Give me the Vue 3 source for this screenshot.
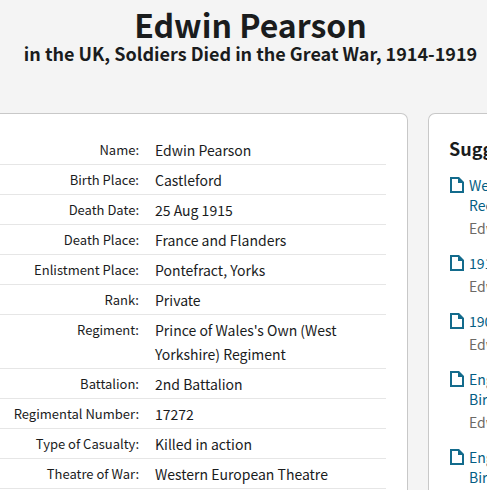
<script setup>
const facts = [
  { id: 'name', label: 'Name', value: 'Edwin Pearson' },
  { id: 'birth', label: 'Birth Place', value: 'Castleford' },
  { id: 'death-date', label: 'Death Date', value: '25 Aug 1915' },
  { id: 'death-place', label: 'Death Place', value: 'France and Flanders' },
  { id: 'enlistment', label: 'Enlistment Place', value: 'Pontefract, Yorks' },
  { id: 'rank', label: 'Rank', value: 'Private' },
  { id: 'regiment', label: 'Regiment', value: "Prince of Wales's Own (West Yorkshire) Regiment" },
  { id: 'battalion', label: 'Battalion', value: '2nd Battalion' },
  { id: 'number', label: 'Regimental Number', value: '17272' },
  { id: 'casualty', label: 'Type of Casualty', value: 'Killed in action' },
  { id: 'theatre', label: 'Theatre of War', value: 'Western European Theatre' },
]

const suggestions = [
  { id: 1, lines: ['West Yorkshire', 'Records'], person: 'Edwin Pearson' },
  { id: 2, lines: ['1911 England Census'], person: 'Edwin Pearson' },
  { id: 3, lines: ['1901 England Census'], person: 'Edwin Pearson' },
  { id: 4, lines: ['England & Wales, Civil Registration', 'Birth Index'], person: 'Edwin Pearson' },
  { id: 5, lines: ['England & Wales, Civil Registration', 'Birth Index'], person: 'Edwin Pearson' },
]
</script>

<template>
  <div class="page">
    <header class="heading">
      <h1>Edwin Pearson</h1>
      <p class="collection">in the UK, Soldiers Died in the Great War, 1914-1919</p>
    </header>
    <div class="columns">
      <main class="card record">
        <table>
          <tbody>
            <tr v-for="fact in facts" :key="fact.id">
              <th scope="row">{{ fact.label }}:</th>
              <td>{{ fact.value }}</td>
            </tr>
          </tbody>
        </table>
      </main>
      <aside class="card related">
        <h2>Suggested Records</h2>
        <ul>
          <li v-for="item in suggestions" :key="item.id">
            <svg class="doc" viewBox="0 0 16 18" aria-hidden="true">
              <path d="M2 2h7.6L14 6.4V16H2z" fill="none" stroke="currentColor" stroke-width="2" />
              <path d="M9 2l5 5H9z" fill="currentColor" />
            </svg>
            <div>
              <a href="#"><span v-for="line in item.lines" :key="line">{{ line }}</span></a>
              <p>{{ item.person }}</p>
            </div>
          </li>
        </ul>
      </aside>
    </div>
  </div>
</template>

<style>
body {
  margin: 0;
  background: #f4f4f4;
}
</style>

<style scoped>
.page {
  box-sizing: border-box;
  height: 100vh;
  overflow: hidden;
  background: #f4f4f4;
  color: #1a1c1d;
  font-family: "Noto Sans CJK SC", "Noto Sans", sans-serif;
  font-size: 14px;
  line-height: 24px;
}

h1,
h2,
p,
ul {
  margin: 0;
  padding: 0;
}

.heading {
  padding: 6px 0 49px 14px;
  text-align: center;
  white-space: nowrap;
}

h1 {
  font-size: 32px;
  line-height: 36px;
}

.collection {
  font-size: 18px;
  font-weight: 700;
  line-height: 22px;
}

.columns {
  display: grid;
  grid-template-columns: minmax(0, 1fr) 59px;
  gap: 20px;
}

.card {
  border: 1px solid #c8c8c8;
  background: #fff;
}

.record {
  padding: 21px 21px 20px 0;
  border-left: 0;
  border-radius: 0 7px 7px 0;
}

table {
  width: 100%;
  border-collapse: separate;
  border-spacing: 0;
}

th,
td {
  padding: 3px 0 2px;
  border-bottom: 1px solid #e6e6e6;
  vertical-align: top;
}

th {
  width: 139px;
  padding-right: 16px;
  font-size: 13px;
  font-weight: 400;
  text-align: right;
  white-space: nowrap;
}

td {
  text-align: left;
}

.related {
  padding: 20px 0 20px 20px;
  border-right: 0;
  border-radius: 7px 0 0 7px;
  overflow: hidden;
  white-space: nowrap;
}

h2 {
  margin-bottom: 13px;
  font-size: 18px;
  line-height: 28px;
}

ul {
  display: grid;
  gap: 15px;
  list-style: none;
}

li {
  display: flex;
  gap: 4px;
  line-height: 20px;
}

.doc {
  flex: none;
  width: 16px;
  height: 18px;
  margin-top: 1px;
  color: #136b8c;
}

a {
  color: #045e84;
  text-decoration: none;
}

a span {
  display: block;
}

li p {
  margin-top: 3px;
  color: #6c6a66;
}
</style>
